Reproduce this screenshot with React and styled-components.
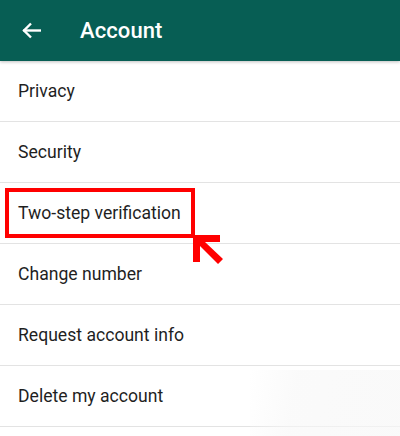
import React from 'react';
import styled, { createGlobalStyle } from 'styled-components';

const GlobalStyle = createGlobalStyle`
  html, body {
    margin: 0;
    padding: 0;
    background: #ffffff;
  }
  body {
    font-family: Roboto, "Liberation Sans", sans-serif;
  }
`;

const Screen = styled.div`
  position: relative;
  width: 400px;
  height: 436px;
  overflow: hidden;
  background: #ffffff;
`;

const Toolbar = styled.header`
  display: flex;
  align-items: center;
  height: 61px;
  padding-left: 22px;
  background: #075e54;
  box-shadow: 0 1px 3px rgba(0, 0, 0, 0.25);
  position: relative;
  z-index: 1;
`;

const BackIcon = styled.svg`
  width: 19px;
  height: 19px;
  fill: none;
  stroke: #ffffff;
  stroke-width: 2.4px;
  stroke-linecap: square;
`;

const Title = styled.h1`
  margin: 0 0 0 39px;
  font-size: 22px;
  font-weight: 500;
  color: #ffffff;
  letter-spacing: 0.1px;
`;

const List = styled.ul`
  list-style: none;
  margin: 0;
  padding: 0;
`;

const Row = styled.li`
  display: flex;
  align-items: center;
  height: 60px;
  padding-left: 18px;
  border-bottom: 1px solid #e3e3e3;
  font-size: 17.6px;
  color: #1f1f1f;
`;

const Highlight = styled.span`
  margin-left: -13px;
  padding: 11px 10px 11px 9px;
  border: 4px solid #ff0000;
`;

const Pointer = styled.svg`
  position: absolute;
  left: 190px;
  top: 233px;
  width: 36px;
  height: 32px;
`;

const Smudge = styled.div`
  position: absolute;
  right: 0;
  bottom: 0;
  width: 150px;
  height: 66px;
  background: linear-gradient(100deg, rgba(255, 255, 255, 0) 0%, rgba(247, 247, 247, 0.6) 30%, rgba(247, 247, 247, 0.7) 100%);
  pointer-events: none;
`;

const items = [
  'Privacy',
  'Security',
  'Two-step verification',
  'Change number',
  'Request account info',
  'Delete my account',
];

export default function App() {
  return (
    <Screen>
      <GlobalStyle />
      <Toolbar>
        <BackIcon viewBox="0 0 19 19">
          <path d="M18 9.5H2.5" />
          <path d="M9 2.5L2 9.5L9 16.5" strokeLinecap="butt" />
        </BackIcon>
        <Title>Account</Title>
      </Toolbar>
      <List>
        {items.map(label => (
          <Row key={label}>
            {label === 'Two-step verification' ? <Highlight>{label}</Highlight> : label}
          </Row>
        ))}
      </List>
      <Pointer viewBox="0 0 36 32">
        <polygon points="3,2 30,2 30,9 15,9 33,26 28,31 10,13 10,29 3,29" fill="#ff0000" />
      </Pointer>
      <Smudge />
    </Screen>
  );
}
